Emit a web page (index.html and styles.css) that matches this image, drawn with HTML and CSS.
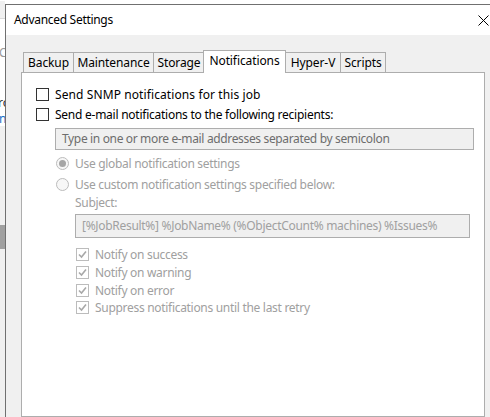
FILE: index.html
```html
<!DOCTYPE html>
<html>
<head>
<meta charset="utf-8">
<link rel="stylesheet" href="styles.css">
</head>
<body>
<div class="bg-strip">
  <div class="bg-top"></div>
  <div class="bg-frag bg-frag-cl">Cl</div>
  <div class="bg-frag bg-frag-ro">ro</div>
  <div class="bg-frag bg-frag-n">n</div>
  <div class="bg-lower">
    <div class="bg-block"></div>
  </div>
</div>
<div class="dialog">
  <div class="titlebar">
    <span class="title">Advanced Settings</span>
    <svg class="close" width="11" height="11" viewBox="0 0 11 11"><path d="M0.5 0.5 L10.5 10.5 M10.5 0.5 L0.5 10.5" stroke="#000" stroke-width="1" fill="none"/></svg>
  </div>
  <div class="client">
    <div class="tabs">
      <div class="tab tab-backup">Backup</div>
      <div class="tab tab-maint">Maintenance</div>
      <div class="tab tab-storage">Storage</div>
      <div class="tab tab-active">Notifications</div>
      <div class="tab tab-hyperv">Hyper-V</div>
      <div class="tab tab-scripts">Scripts</div>
    </div>
    <div class="panel">
      <label class="row row-snmp"><span class="cb"></span><span>Send SNMP notifications for this job</span></label>
      <label class="row row-mail"><span class="cb"></span><span>Send e-mail notifications to the following recipients:</span></label>
      <div class="input input-mail">Type in one or more e-mail addresses separated by semicolon</div>
      <div class="row row-radio1 disabled"><span class="rb rb-on"></span><span>Use global notification settings</span></div>
      <div class="row row-radio2 disabled"><span class="rb"></span><span>Use custom notification settings specified below:</span></div>
      <div class="subject-label disabled">Subject:</div>
      <div class="input input-subject disabled">[%JobResult%] %JobName% (%ObjectCount% machines) %Issues%</div>
      <div class="checks">
        <div class="row row-check disabled"><span class="cb cb-dis"><svg width="9" height="9" viewBox="0 0 9 9"><path d="M1 4.5 L3.5 7 L8 1.5" stroke="#a8a8a8" stroke-width="1.6" fill="none"/></svg></span><span>Notify on success</span></div>
        <div class="row row-check disabled"><span class="cb cb-dis"><svg width="9" height="9" viewBox="0 0 9 9"><path d="M1 4.5 L3.5 7 L8 1.5" stroke="#a8a8a8" stroke-width="1.6" fill="none"/></svg></span><span>Notify on warning</span></div>
        <div class="row row-check disabled"><span class="cb cb-dis"><svg width="9" height="9" viewBox="0 0 9 9"><path d="M1 4.5 L3.5 7 L8 1.5" stroke="#a8a8a8" stroke-width="1.6" fill="none"/></svg></span><span>Notify on error</span></div>
        <div class="row row-check disabled"><span class="cb cb-dis"><svg width="9" height="9" viewBox="0 0 9 9"><path d="M1 4.5 L3.5 7 L8 1.5" stroke="#a8a8a8" stroke-width="1.6" fill="none"/></svg></span><span>Suppress notifications until the last retry</span></div>
      </div>
    </div>
  </div>
</div>
</body>
</html>
```
FILE: styles.css
```css
* { box-sizing: border-box; }
html, body {
  margin: 0;
  padding: 0;
}
body {
  width: 490px;
  height: 417px;
  overflow: hidden;
  display: flex;
  background: #ffffff;
  font-family: "Noto Sans", "Open Sans", sans-serif;
  font-size: 12px;
  color: #000;
}
.bg-strip {
  width: 5px;
  flex: none;
  display: flex;
  flex-direction: column;
  overflow: hidden;
  background: #ffffff;
}
.bg-top {
  height: 37px;
  border-top: 1px solid transparent;
  background: linear-gradient(#f0f0f0 0, #f0f0f0 17px, #d9d9d9 17px, #d9d9d9 18px, #ffffff 18px, #ffffff 36px, #e3e3e3 36px);
}
.bg-frag {
  white-space: nowrap;
  font-size: 12px;
  line-height: 14px;
  width: 5px;
  overflow: hidden;
}
.bg-frag-cl { margin-top: 9px; color: #9a9a9a; text-indent: -1px; }
.bg-frag-ro { margin-top: 36px; color: #333; text-indent: -2px; }
.bg-frag-n { margin-top: 2px; color: #1a73c9; text-indent: -1px; }
.bg-lower {
  flex: 1;
  background: #f0f0f0;
  padding-top: 99px;
}
.bg-block {
  height: 24px;
  background: #a0a0a0;
}
.dialog {
  flex: 1;
  margin-top: 4px;
  border-left: 1px solid #707070;
  border-top: 1px solid #707070;
  background: #f0f0f0;
  display: flex;
  flex-direction: column;
  min-width: 0;
}
.titlebar {
  height: 30px;
  background: #ffffff;
  display: flex;
  align-items: center;
  justify-content: space-between;
  padding: 0 1px 0 8px;
  flex: none;
}
.title {
  font-size: 12px;
  color: #000;
  padding-bottom: 1px;
  letter-spacing: -0.3px;
}
.close {
  display: block;
}
.client {
  flex: 1;
  padding: 15px 5px 0 15px;
  display: flex;
  flex-direction: column;
}
.tabs {
  display: flex;
  align-items: flex-end;
  padding-left: 2px;
  height: 23px;
  position: relative;
  z-index: 1;
  margin-bottom: -1px;
}
.tab {
  height: 20px;
  margin-bottom: 1px;
  border: 1px solid #adadad;
  border-bottom: none;
  background: #f0f0f0;
  display: flex;
  align-items: center;
  justify-content: center;
  white-space: nowrap;
  margin-right: -1px;
  padding-bottom: 1px;
  letter-spacing: -0.1px;
}
.tab-backup { width: 51px; }
.tab-maint { width: 81px; }
.tab-storage { width: 52px; }
.tab-active {
  width: 83px;
  height: 23px;
  margin-bottom: 0;
  margin-left: -1px;
  background: #ffffff;
  padding-bottom: 3px;
  position: relative;
  z-index: 2;
}
.tab-hyperv { width: 56px; }
.tab-scripts { width: 46px; }
.panel {
  flex: 1;
  background: #ffffff;
  border: 1px solid #adadad;
  padding: 11px 0 0 14px;
  display: flex;
  flex-direction: column;
  align-items: flex-start;
}
.row {
  display: flex;
  align-items: center;
  height: 20px;
  white-space: nowrap;
  letter-spacing: -0.3px;
}
.row-snmp { letter-spacing: 0.1px; }
.row-mail { letter-spacing: -0.25px; }
.cb {
  width: 13px;
  height: 13px;
  border: 1px solid #333333;
  background: #ffffff;
  margin-right: 6px;
  flex: none;
  display: flex;
  align-items: center;
  justify-content: center;
}
.cb-dis {
  border-color: #bcbcbc;
  background: #ffffff;
}
.input {
  height: 22px;
  border: 1px solid #adadad;
  background: #f0f0f0;
  display: flex;
  align-items: center;
  padding: 0 0 1px 6px;
  white-space: nowrap;
  letter-spacing: -0.35px;
}
.input-mail {
  margin: 4px 0 0 19px;
  width: 419px;
  color: #6d6d6d;
}
.disabled { color: #a0a0a0; }
.row-radio1 { margin: 3px 0 0 20px; }
.row-radio2 { margin: 1px 0 0 20px; }
.rb {
  width: 13px;
  height: 13px;
  border: 1px solid #bcbcbc;
  border-radius: 50%;
  background: #f7f7f7;
  margin-right: 6px;
  flex: none;
  display: flex;
  align-items: center;
  justify-content: center;
}
.rb-on::after {
  content: "";
  width: 7px;
  height: 7px;
  border-radius: 50%;
  background: #a6a6a6;
}
.subject-label {
  margin: 0 0 0 39px;
  height: 18px;
  line-height: 18px;
  letter-spacing: -0.3px;
}
.input-subject {
  margin: 2px 0 0 39px;
  width: 395px;
  height: 24px;
  letter-spacing: -0.3px;
}
.checks {
  margin: 8px 0 0 40px;
  display: flex;
  flex-direction: column;
}
.row-check {
  height: 17.7px;
}
```
